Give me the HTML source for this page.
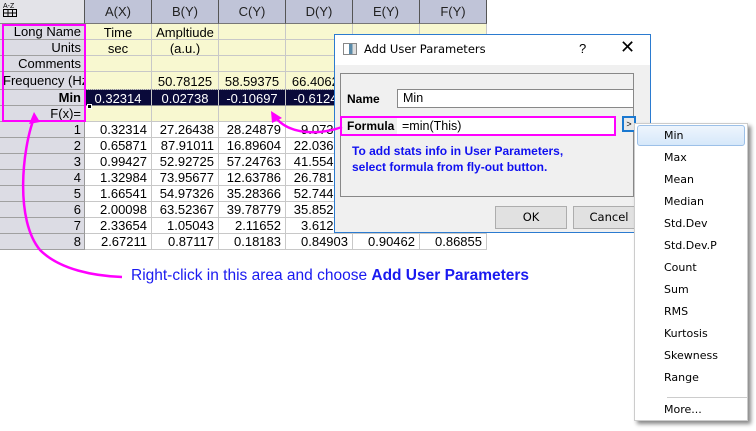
<!DOCTYPE html>
<html><head><meta charset="utf-8"><style>
*{margin:0;padding:0;box-sizing:border-box}
body{width:756px;height:431px;background:#fff;position:relative;overflow:hidden;font-family:"Liberation Sans",Arial,sans-serif;font-size:13px;color:#000}
.a{position:absolute}
.c{position:absolute;border-right:1px solid #c8c8c8;border-bottom:1px solid #c8c8c8;text-align:right;padding-right:4px;line-height:15px;white-space:nowrap;overflow:hidden;font-size:13px}
.h{background:#dcdce4;border-right:1px solid #999;border-bottom:1px solid #a0a0a0;padding-right:3px}
.y{background:#f8f8d0;text-align:center;padding:0}
.d{text-align:right}
.mi{position:absolute;left:664px;font-family:"DejaVu Sans",sans-serif;font-size:11px}
</style></head><body>
<div class="a" style="left:0;top:0;width:85px;height:24px;background:#e3e3e8;border-right:1px solid #555;border-bottom:1px solid #888"></div>
<svg class="a" style="left:3px;top:2px" width="16" height="16"><text x="0" y="6" font-size="7" font-family="Liberation Sans">A-Z</text><rect x="0.5" y="7.5" width="13" height="7" fill="none" stroke="#000"/><line x1="0" y1="11" x2="14" y2="11" stroke="#000"/><line x1="5" y1="7" x2="5" y2="15" stroke="#000"/><line x1="9.5" y1="7" x2="9.5" y2="15" stroke="#000"/></svg>
<div id="g"></div>
<script>
var cols=['A(X)','B(Y)','C(Y)','D(Y)','E(Y)','F(Y)'];
var L=[85,152,219,286,353,420,487];
var h='';
for(var i=0;i<6;i++)h+='<div class="a" style="left:'+L[i]+'px;top:0;width:67px;height:24px;background:#c0c4d8;border-right:1px solid #555;border-bottom:1px solid #777;text-align:center;line-height:24px;font-size:13px;color:#222">'+cols[i]+'</div>';
var rows=[['Long Name',24,16,'y',['Time','Ampltiude','','','','']],['Units',40,16,'y',['sec','(a.u.)','','','','']],['Comments',56,16,'y',['','','','','','']],['Frequency (Hz',72,18,'y',['','50.78125','58.59375','66.40625','','']],['Min',90,16,'m',['0.32314','0.02738','-0.10697','-0.61245','','']],['F(x)=',106,16,'y',['','','','','','']]];
var dat=[['0.32314','27.26438','28.24879','9.07314'],['0.65871','87.91011','16.89604','22.03612'],['0.99427','52.92725','57.24763','41.55421'],['1.32984','73.95677','12.63786','26.78123'],['1.66541','54.97326','35.28366','52.74412'],['2.00098','63.52367','39.78779','35.85212'],['2.33654','1.05043','2.11652','3.61234'],['2.67211','0.87117','0.18183','0.84903','0.90462','0.86855']];
rows.forEach(function(r){
 var lab=r[0]=='Frequency (Hz'?'text-align:left;padding-left:3px;':'';
 h+='<div class="c h" style="left:0;top:'+r[1]+'px;width:85px;height:'+r[2]+'px;line-height:'+(r[2]-1)+'px;'+lab+(r[0]=='Min'?'font-weight:bold;':'')+'">'+r[0]+'</div>';
 for(var i=0;i<6;i++){
  var st=r[3]=='m'?'background:#0a0a3a;color:#fff;text-align:center;border-bottom:1px solid #888;':'';
  h+='<div class="c y" style="left:'+L[i]+'px;top:'+r[1]+'px;width:67px;height:'+r[2]+'px;line-height:'+(r[2]+1)+'px;'+st+'">'+r[4][i]+'</div>';
 }
});
for(var k=0;k<8;k++){
 var t=122+k*16;
 h+='<div class="c h" style="left:0;top:'+t+'px;width:85px;height:16px">'+(k+1)+'</div>';
 for(var i=0;i<6;i++){var v=dat[k][i]||'';h+='<div class="c d" style="left:'+L[i]+'px;top:'+t+'px;width:67px;height:16px">'+v+'</div>';}
}
document.getElementById('g').innerHTML=h;
</script>
<div class="a" style="left:85px;top:89px;width:402px;height:2px;border-top:1px dotted #888"></div>
<div class="a" style="left:87px;top:104px;width:5px;height:5px;background:#000;border:1px solid #fff"></div>
<div class="a" style="left:2px;top:24px;width:84px;height:98px;border:2px solid #f0f"></div>
<!-- dialog -->
<div class="a" style="left:334px;top:34px;width:317px;height:199px;background:#f0f0f0;border:1px solid #2b7bd0"></div>
<div class="a" style="left:335px;top:35px;width:315px;height:30px;background:#fff"></div>
<div class="a" style="left:343px;top:43px;width:14px;height:12px;border:1px solid #888;background:linear-gradient(90deg,#fff 40%,#5a8aa8 40%,#5a8aa8 70%,#ddd 70%)"></div>
<div class="a" style="left:364px;top:42px;font-family:'DejaVu Sans',sans-serif;font-size:11.5px">Add User Parameters</div>
<div class="a" style="left:579px;top:41px;font-size:13px">?</div>
<div class="a" style="left:620px;top:37px;font-size:18px;font-family:'DejaVu Sans'">✕</div>
<div class="a" style="left:340px;top:73px;width:294px;height:124px;border:1px solid #888"></div>
<div class="a" style="left:347px;top:92px;font-weight:bold;font-size:12px">Name</div>
<div class="a" style="left:397px;top:89px;width:237px;height:19px;background:#fff;border:1px solid #888;padding-left:5px;line-height:17px;font-size:12.5px">Min</div>
<div class="a" style="left:340px;top:116px;width:276px;height:20px;border:2px solid #f0f;background:#fff"></div>
<div class="a" style="left:342px;top:118px;width:55px;height:16px;background:#f0f0f0;font-weight:bold;font-size:12px;padding-left:5px;line-height:16px">Formula</div>
<div class="a" style="left:402px;top:118px;line-height:16px;font-size:12.5px">=min(This)</div>
<div class="a" style="left:622px;top:116px;width:14px;height:16px;border:2px solid #1a78d0;background:#e8e8e8;font-size:9px;text-align:center;line-height:12px">&gt;</div>
<div class="a" style="left:352px;top:143px;color:#1010f0;font-weight:bold;font-size:12px;line-height:16px">To add stats info in User Parameters,<br>select formula from fly-out button.</div>
<div class="a" style="left:495px;top:206px;width:72px;height:23px;background:#e1e1e1;border:1px solid #adadad;text-align:center;line-height:21px;font-family:'DejaVu Sans';font-size:11.5px">OK</div>
<div class="a" style="left:573px;top:206px;width:72px;height:23px;background:#e1e1e1;border:1px solid #adadad;text-align:center;line-height:21px;font-family:'DejaVu Sans';font-size:11.5px">Cancel</div>
<!-- menu -->
<div class="a" style="left:634px;top:123px;width:114px;height:298px;background:#fff;border:1px solid #ccc;box-shadow:3px 3px 4px #888"></div>
<div class="a" style="left:637px;top:125px;width:108px;height:21px;border:1px solid #9cc0e8;border-radius:3px;background:linear-gradient(#eef5fd,#d6e8fa)"></div>
<div id="m"></div>
<script>
var it=['Min','Max','Mean','Median','Std.Dev','Std.Dev.P','Count','Sum','RMS','Kurtosis','Skewness','Range'];
var s='';it.forEach(function(t,i){s+='<div class="mi" style="top:'+(129+i*22)+'px">'+t+'</div>';});
s+='<div class="a" style="left:667px;top:397px;width:80px;height:1px;background:#ccc"></div><div class="mi" style="top:403px">More...</div>';
document.getElementById('m').innerHTML=s;
</script>
<svg class="a" style="left:0;top:0" width="756" height="431">
<path d="M34,118 C22,150 15,220 40,250 C60,270 95,276 122,277" fill="none" stroke="#f0f" stroke-width="2.5"/>
<path d="M34,112 L29,124 L40,122 Z" fill="#f0f"/>
<path d="M342,127 C320,135 290,135 276,118" fill="none" stroke="#f0f" stroke-width="2.5"/>
<path d="M271,111 L272,123 L282,118 Z" fill="#f0f"/>
</svg>
<div class="a" style="left:131px;top:267px;font-size:15.5px;color:#1a1af0">Right-click in this area and choose <b>Add User Parameters</b></div>
</body></html>
